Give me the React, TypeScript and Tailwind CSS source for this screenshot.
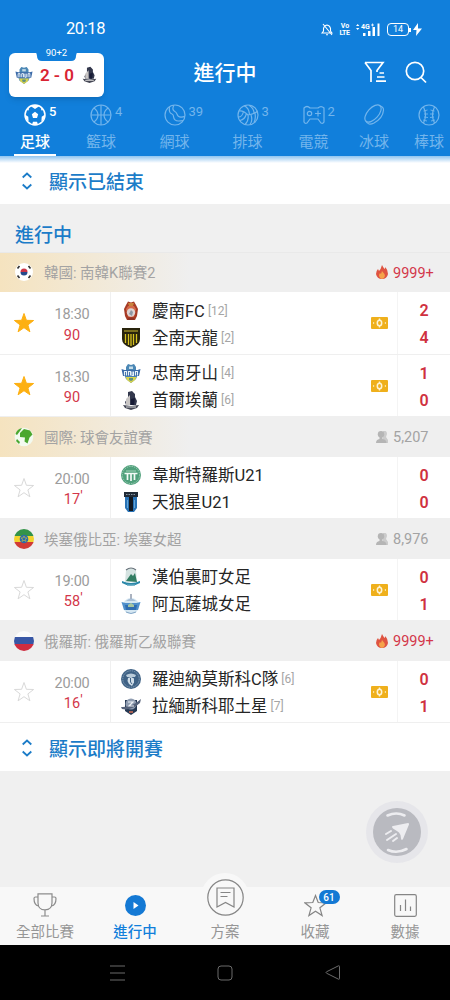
import React from 'react';

type CrestName =
  | 'gyeongnam' | 'jeonnam' | 'asan' | 'eland' | 'vasteras'
  | 'sirius' | 'hambericho' | 'hawassa' | 'rodina' | 'saturn';

interface Team {
  name: string;
  rank?: number;
  crest: CrestName;
  score: number;
}

interface Match {
  time: string;
  minute: string;
  running?: boolean;
  starred?: boolean;
  cash?: boolean;
  teams: Team[];
}

interface League {
  title: string;
  flag: 'kr' | 'world' | 'et' | 'ru';
  viewers: string;
  hot?: boolean;
  pinned?: boolean;
  matches: Match[];
}

const leagues: League[] = [
  {
    title: '韓國: 南韓K聯賽2', flag: 'kr', viewers: '9999+', hot: true, pinned: true,
    matches: [
      {
        time: '18:30', minute: '90', starred: true, cash: true,
        teams: [
          { name: '慶南FC', rank: 12, crest: 'gyeongnam', score: 2 },
          { name: '全南天龍', rank: 2, crest: 'jeonnam', score: 4 },
        ],
      },
      {
        time: '18:30', minute: '90', starred: true, cash: true,
        teams: [
          { name: '忠南牙山', rank: 4, crest: 'asan', score: 1 },
          { name: '首爾埃蘭', rank: 6, crest: 'eland', score: 0 },
        ],
      },
    ],
  },
  {
    title: '國際: 球會友誼賽', flag: 'world', viewers: '5,207', pinned: true,
    matches: [
      {
        time: '20:00', minute: '17', running: true,
        teams: [
          { name: '韋斯特羅斯U21', crest: 'vasteras', score: 0 },
          { name: '天狼星U21', crest: 'sirius', score: 0 },
        ],
      },
    ],
  },
  {
    title: '埃塞俄比亞: 埃塞女超', flag: 'et', viewers: '8,976',
    matches: [
      {
        time: '19:00', minute: '58', running: true, cash: true,
        teams: [
          { name: '漢伯裏町女足', crest: 'hambericho', score: 0 },
          { name: '阿瓦薩城女足', crest: 'hawassa', score: 1 },
        ],
      },
    ],
  },
  {
    title: '俄羅斯: 俄羅斯乙級聯賽', flag: 'ru', viewers: '9999+', hot: true,
    matches: [
      {
        time: '20:00', minute: '16', running: true, cash: true,
        teams: [
          { name: '羅迪納莫斯科C隊', rank: 6, crest: 'rodina', score: 0 },
          { name: '拉緬斯科耶土星', rank: 7, crest: 'saturn', score: 1 },
        ],
      },
    ],
  },
];

const crests: Record<CrestName, React.ReactNode> = {
  gyeongnam: (
    <>
      <path d="M5 4l2-3.500 3 1 3-1L15 4l2 4-1 7-2 4H6l-2-4-1-7z" fill="#a63a25" />
      <path d="M5 8l2-3h6l2 3-2 8H7z" fill="#d5694a" />
      <circle cx="10" cy="11.5" r="4.2" fill="#ddd3d2" />
      <path d="M8 13l2-4 2 2-1 4z" fill="#8d98a5" />
      <path d="M7 2h6l-1 3H8z" fill="#c8833d" />
      <path d="M7 17h6v2H7z" fill="#8f3326" />
    </>
  ),
  jeonnam: (
    <>
      <path d="M1 0h18v11q0 6-9 9q-9-3-9-9z" fill="#29240d" />
      <path d="M4.5 6v9M7.5 6v11M10 6v12M12.5 6v11M15.5 6v9" stroke="#d7c21e" strokeWidth="1.3" />
      <path d="M3 3h14" stroke="#b4a32b" strokeWidth="1.2" />
    </>
  ),
  asan: (
    <>
      <path d="M5 4l2-3 3 1 3-1 2 3v4H5z" fill="#4b87b5" />
      <path d="M8 3.500h4V6H8z" fill="#c5dce8" />
      <path d="M2.500 10h15L15 16l-5 4-5-4z" fill="#4a80b4" />
      <path d="M4.500 14h11L14 17l-4 3-4-3z" fill="#d8d44b" />
      <path d="M8 15h4v2l-2 1-2-1z" fill="#5f8f80" />
      <path d="M.5 6l3 1h13l3-1-1.500 7H2z" fill="#3b6aa8" />
      <path d="M3.500 12.500v-4h2v4M7.500 12.500v-4h2v4M11 8.500v4h1.500v-4M14.500 12.500v-4h2v4" fill="none" stroke="#e6f1f8" strokeWidth="1.100" />
    </>
  ),
  eland: (
    <>
      <path d="M7 2l4-1 3 3v3l2 4-1 4H5l-1-3 3-4z" fill="#33384d" />
      <path d="M5 9l4-4v10H5z" fill="#c9c6c5" />
      <path d="M10 9l4-1-1 7h-3z" fill="#171b36" />
      <path d="M2 15l8 1 8-1-2 3-6 2-6-2z" fill="#454856" />
      <path d="M5 17h10" stroke="#d8d8d8" />
    </>
  ),
  vasteras: (
    <>
      <circle cx="10" cy="10" r="10" fill="#4fa07b" />
      <circle cx="10" cy="10" r="8.6" fill="none" stroke="#bcdccb" strokeWidth=".7" strokeDasharray="1.4 1" />
      <path d="M3.5 8.5h13M6.5 9v6M10 9v7M13.5 9v6" stroke="#f2faf6" strokeWidth="1.7" />
      <path d="M5 6h10" stroke="#a5d3ba" />
    </>
  ),
  sirius: (
    <>
      <path d="M3 0h14v5H3z" fill="#202a36" />
      <path d="M4 5h12v11l-3 4H7l-3-4z" fill="#2872b5" />
      <path d="M8 5h4v14H8z" fill="#121820" />
      <path d="M5 2.500h10" stroke="#8897a4" strokeDasharray="1.5 1" />
      <path d="M6.5 8v8M13.5 8v8" stroke="#74b2e0" strokeWidth=".8" />
    </>
  ),
  hambericho: (
    <>
      <path d="M5 3q5-4 10 0l1 12H4z" fill="#d5e3e1" />
      <path d="M5 3q5-4 10 0" fill="none" stroke="#68727b" strokeWidth="1.2" />
      <path d="M5 14l5-7 2 2 2-3 2 9z" fill="#327d62" />
      <path d="M1 14q9 4 18 0v2q-9 5-18 0z" fill="#2b88a9" />
      <path d="M6 18h8" stroke="#5ca5bf" strokeWidth="1.4" />
    </>
  ),
  hawassa: (
    <>
      <circle cx="10" cy="12" r="8" fill="#d5e7f2" />
      <path d="M10 0v6" stroke="#8f9aab" strokeWidth="1.5" />
      <path d="M5 7q5-5 10 0z" fill="#a8bed6" />
      <path d="M.5 8l4 1h11l4-1L17 16H3z" fill="#4f90cc" />
      <path d="M4 11h12l-1 5H5z" fill="#2f6db0" />
      <path d="M7 11l3-2 3 2v2H7z" fill="#a6c5a0" />
      <path d="M5 18q5 3 10 0" fill="none" stroke="#85a7c7" />
    </>
  ),
  rodina: (
    <>
      <circle cx="10" cy="10" r="10" fill="#3f6285" />
      <circle cx="10" cy="10" r="8.200" fill="none" stroke="#8fa8bf" strokeWidth=".8" strokeDasharray="1.500 .8" />
      <path d="M5 6q5-3 10 0l-1 2H6z" fill="#b9cbd9" />
      <path d="M7 9l3-1 3 1.500v4L11 17l-3-2-1.500-3z" fill="#cfdde8" />
      <path d="M9.500 9v4l1.500 2" fill="none" stroke="#3f6285" strokeWidth="1" />
    </>
  ),
  saturn: (
    <>
      <path d="M4 4h12v11l-6 4-6-4z" fill="#243751" />
      <circle cx="10" cy="8" r="5.500" fill="#8f9cb0" />
      <path d="M0 11q10 1 20-8l-1 4Q10 15 1 13z" fill="#56627a" />
      <path d="M7 6h5l-4 4h5" fill="none" stroke="#eef1f5" strokeWidth="1.2" />
      <path d="M8 15h4v2H8z" fill="#a86155" />
    </>
  ),
};

const Crest = ({ name, className = 'size-5' }: { name: CrestName; className?: string }) => (
  <svg viewBox="0 0 20 20" className={className}>{crests[name]}</svg>
);

const flags = {
  kr: (
    <>
      <circle cx="10" cy="10" r="9" fill="#fff" />
      <path d="M6.5 10a3.5 3.5 0 0 1 7 0z" fill="#cc3547" />
      <path d="M6.5 10a3.5 3.5 0 0 0 7 0z" fill="#254a8c" />
      <path d="M3.5 6.5l2-2.5M14.5 4l2 2.5M3.5 13.5l2 2.5M14.5 16l2-2.5" stroke="#333" strokeWidth="1.7" />
    </>
  ),
  world: (
    <>
      <circle cx="10" cy="10" r="9.3" fill="#f3faf0" />
      <path d="M1.500 7Q3 2 8 1L6 4 3 8zM6 6l4-4 6 1.500 2.500 4-3 3-2 6-3-2 .5-4-5-.5zM3 12l3 3-1 2-3-3z" fill="#4ba72f" />
    </>
  ),
  et: (
    <>
      <rect width="20" height="7" fill="#339348" />
      <rect y="7" width="20" height="6" fill="#f2d32e" />
      <rect y="13" width="20" height="7" fill="#d13b35" />
      <circle cx="10" cy="10" r="4.300" fill="#2d6ca8" />
      <path d="M10 7l1 2h2l-1.600 1.300.6 2.200-2-1.300-2 1.300.6-2.200L7 9h2z" fill="none" stroke="#bdb94b" strokeWidth=".7" />
    </>
  ),
  ru: (
    <>
      <rect width="20" height="7" fill="#fafafa" />
      <rect y="6" width="20" height="7.500" fill="#3857a5" />
      <rect y="13" width="20" height="7" fill="#cf2d40" />
    </>
  ),
};

const sportIcons = {
  soccer: (
    <>
      <circle cx="11" cy="11" r="10" strokeWidth="1.500" />
      <path d="M11 7.800l3.200 2.400-1.200 3.800H9l-1.200-3.800z" fill="currentColor" stroke="none" />
      <path d="M6.500 2l4.500 3 4.500-3Q11 0 6.500 2zM1 10.500l3.300 2.300.3 4.700Q1 15 1 10.500zM21 10.500l-3.300 2.300-.3 4.700Q21 15 21 10.500zM8 20.500l1-2.700h4l1 2.700q-3 1-6 0zM2.500 6l2 .5L5.500 3zM19.500 6l-2 .5L16.500 3z" fill="currentColor" stroke="none" />
    </>
  ),
  basketball: (
    <>
      <circle cx="11" cy="11" r="10" />
      <path d="M11 1v20M1 11h20M4 4q4 3 4 7t-4 7M18 4q-4 3-4 7t4 7" />
    </>
  ),
  tennis: (
    <>
      <circle cx="11" cy="11" r="10" />
      <path d="M5.500 2.800q-1 6 2.500 7.200 1.500.6 1.500 2.500.5 4.500 5 4.500 3 0 4.500-.5" />
      <path d="M10 1.200q-2.500 4 .5 6 2 1 2.500 3 .8 3 4 3 2.500-.2 3.800-1" />
    </>
  ),
  volleyball: (
    <>
      <circle cx="11" cy="11" r="10" />
      <path d="M11 11q-5-5-9-4M11 11q1 6-3 9.500M11 11q7-1 9.500-4M7 1.800q5 2 5.500 8.500M12 1.200q5 3 5 8M3 16.500q5-1 6.300-6.500M1.300 13q4 0 5-5M13 20.500q3-4 1-9.500M17 18.500q2-4 1-9" />
    </>
  ),
  esports: (
    <>
      <path d="M1 4q3-3 6 0h8q3-3 6 0v14q-1 2-3 1l-3-4H7l-3 4q-2 1-3-1z" />
      <circle cx="6.500" cy="9.500" r="2.200" />
      <path d="M15 6.500v6M12 9.500h6" />
    </>
  ),
  hockey: (
    <>
      <ellipse cx="10" cy="9.500" rx="10.500" ry="5.500" transform="rotate(-48 10 9.500)" />
      <path d="M3 17q2 5 8 2 9-5 9.500-13 .2-3-4-4.500" />
    </>
  ),
  baseball: (
    <>
      <circle cx="11" cy="11" r="10" />
      <path d="M5.500 3q4 8 0 16M16.500 3q-4 8 0 16" />
      <path d="M5.500 7l4-1M6 10h4M6 13l4 .5M5 16l4 1M16.500 7l-4-1M16 10h-4M16 13l-4 .5M17 16l-4 1" strokeWidth=".9" />
    </>
  ),
};

const sports = [
  { label: '足球', count: 5, icon: 'soccer', width: 'w-[70px]' },
  { label: '籃球', count: 4, icon: 'basketball', width: 'w-[62px]' },
  { label: '網球', count: 39, icon: 'tennis', width: 'w-[85px]' },
  { label: '排球', count: 3, icon: 'volleyball', width: 'w-[61px]' },
  { label: '電競', count: 2, icon: 'esports', width: 'w-[71px]' },
  { label: '冰球', icon: 'hockey', width: 'w-[50px]' },
  { label: '棒球', icon: 'baseball', width: 'w-[60px]' },
] as const;

const StatusBar = () => (
  <div className="flex h-[50px] items-center pt-[9px] pr-[28px] pl-[66px]">
    <span className="text-[16.5px] tracking-tight">20:18</span>
    <div className="ml-auto flex items-center">
      <svg className="mr-[7px] h-[13px] w-[12px]" viewBox="0 0 12 13" fill="none" stroke="currentColor" strokeWidth="1.1">
        <path d="M1 10h10L9.500 8V5.500Q9 2.500 6 2 3 2.500 2.500 5.500V8zM5 11.800h2M2 1l9 11" />
      </svg>
      <div className="mr-[6px] w-[10px] text-center text-[7px] leading-[6.5px] font-bold">
        <div>Vo</div>
        <div className="-ml-px tracking-tighter">LTE</div>
      </div>
      <svg className="mr-[7px] h-[15px] w-[24px]" viewBox="0 0 24 15" fill="currentColor">
        <path d="M0 4l1.700-2 1.700 2zM0 6l1.700 2 1.700-2zM7 11h2.500v3H7zM12 9h2.500v5H12zM16.500 5H19v9h-2.500zM21.500 1.500h2V14h-2z" />
        <text x="5" y="7" fontSize="7" fontWeight="700">4G</text>
        <path d="M15 3h3M16.500 1.500v3" stroke="currentColor" strokeWidth=".8" />
      </svg>
      <div className="flex h-[13px] w-[22px] items-center justify-center rounded-[4px] border border-white text-[9px] leading-none">14</div>
      <div className="h-1 w-[2px] bg-white" />
      <svg className="ml-[2px] h-[13px] w-[9px]" viewBox="0 0 9 13" fill="currentColor">
        <path d="M5 0L0 7h3.500L3 13l6-7.500H5z" />
      </svg>
    </div>
  </div>
);

const MiniScore = () => (
  <div className="absolute top-[3px] left-[9px] flex h-[43.5px] w-[95px] items-center justify-between rounded-[6px] bg-white px-[6px] shadow-md">
    <svg className="absolute -top-px left-[26px] h-[9px] w-[43px]" viewBox="0 0 43 9">
      <path d="M0 0h43q-2 1-2 4 0 5-5 5H7Q2 9 2 4 2 1 0 0z" fill="#117fdb" />
    </svg>
    <span className="absolute -top-[6px] left-0 w-full text-center text-[9.5px] leading-[12px]">90+2</span>
    <Crest name="asan" className="size-[18px]" />
    <span className="text-[17px] leading-5 font-semibold text-[#d92433]">2 - 0</span>
    <Crest name="eland" className="size-[17px]" />
  </div>
);

const Header = () => (
  <header className="bg-[#117fdb] text-white">
    <StatusBar />
    <div className="relative flex h-[46px] items-center justify-end pr-[23px] pb-[2px]">
      <MiniScore />
      <h1 className="absolute inset-x-0 top-0 text-center text-[21px] leading-[47px] font-medium">進行中</h1>
      <svg className="mr-[18px] h-[22px] w-[23px]" viewBox="0 0 23 22" fill="none" stroke="currentColor" strokeWidth="1.700">
        <path d="M1 1.500h18l-6 8v1.500M1 1.500l6 8V21" />
        <path d="M15.500 12H20M13 16h7.500M12 20.200h10" />
      </svg>
      <svg className="h-[23px] w-[22px]" viewBox="0 0 22 23" fill="none" stroke="currentColor" strokeWidth="1.700">
        <circle cx="10" cy="10" r="8.700" />
        <path d="M16 16.500l5 5" />
      </svg>
    </div>
    <nav className="flex h-[60px] overflow-hidden">
      {sports.map((sport, i) => (
        <div
          key={sport.label}
          className={`relative flex shrink-0 flex-col items-center pt-[8px] ${sport.width} ${i === 0 ? 'font-medium' : 'text-[#73b5ec]'}`}
        >
          <div className="relative">
            <svg className="size-[22px]" viewBox="0 0 22 22" fill="none" stroke="currentColor" strokeWidth="1.200">
              {sportIcons[sport.icon]}
            </svg>
            {'count' in sport && (
              <span className="absolute top-0 left-full ml-[3px] text-[13px] leading-[15px]">{sport.count}</span>
            )}
          </div>
          <span className="mt-[5px] text-[15px] leading-[22px]">{sport.label}</span>
          {i === 0 && <span className="absolute bottom-0 h-[2px] w-[42px] bg-white" />}
        </div>
      ))}
    </nav>
  </header>
);

const ToggleRow = ({ label }: { label: string }) => (
  <div className="flex h-12 items-center bg-white pt-[2px] pl-[22px] text-[#1c7cc8]">
    <svg className="mr-[17px] h-[18px] w-[10px]" viewBox="0 0 10 18" fill="none" stroke="currentColor" strokeWidth="1.800">
      <path d="M.7 5.500L5 1.500l4.300 4M.7 12.500l4.300 4 4.300-4" />
    </svg>
    <span className="pt-[3px] text-[19px] leading-6 font-medium">{label}</span>
  </div>
);

const Flame = () => (
  <svg className="h-[14px] w-[12px]" viewBox="0 0 12 14">
    <path d="M6 0q1 2 2.500 4 1-1 .8-2Q12 5 12 9q-1 5-6 5T0 9q0-3 2-5l1 2Q5 4 6 0z" fill="#df5441" />
    <path d="M6 6q3 3 3 5-1 3-3 3t-3-3q0-2 1-3l1 1z" fill="#f5a34a" />
  </svg>
);

const Viewers = () => (
  <svg className="h-[12px] w-[12px]" viewBox="0 0 12 12" fill="#b5b5b5">
    <path d="M7 0q4-1 4 3l-1 3 2 3v3H7z" fill="#cbcbcb" />
    <circle cx="5" cy="3.200" r="3.200" />
    <path d="M3.500 6h3v2q4 .5 4 4H0q0-3.500 3.500-4z" />
  </svg>
);

const Star = ({ filled }: { filled?: boolean }) => (
  <svg className="size-[22px]" viewBox="0 0 22 22">
    <path
      d="M11 1.500l2.400 6.800 7.200.2-5.700 4.400 2 6.900-5.900-4.100-5.900 4.100 2-6.900L1.400 8.500l7.200-.2z"
      fill={filled ? '#fdb012' : 'none'}
      stroke={filled ? '#fdb012' : '#d9d9d9'}
    />
  </svg>
);

const Cash = () => (
  <svg className="h-[12px] w-[17px]" viewBox="0 0 17 12">
    <rect width="17" height="12" rx="1" fill="#efb01c" />
    <ellipse cx="8.500" cy="6" rx="2.200" ry="2.800" fill="none" stroke="#fff4d5" strokeWidth="1.500" />
    <path d="M8.500 1.500v2M8.500 8.500v2" stroke="#fff4d5" strokeWidth="1.400" />
    <path d="M2 6l.8-.8v1.600zM15 6l-.8-.8v1.600z" fill="#fff4d5" stroke="#fff4d5" strokeWidth=".5" />
  </svg>
);

const MatchRow = ({ match }: { match: Match }) => (
  <div className="flex h-[62.5px] border-b border-[#efefef] bg-white">
    <div className="flex w-[48px] items-center justify-center pt-px">
      <Star filled={match.starred} />
    </div>
    <div className="flex w-[48px] flex-col items-center pt-[13px] text-[14.5px] leading-[20.5px]">
      <span className="tracking-[-0.2px] text-[#9c9c9c]">{match.time}</span>
      <span className="relative text-[#d3374a]">
        {match.minute}
        {match.running && <span className="absolute -top-[3px] left-full">'</span>}
      </span>
    </div>
    <div className="ml-[14px] flex flex-1 flex-col border-l border-[#f0f0f0] pt-[5px] pl-[10px]">
      {match.teams.map((team) => (
        <div key={team.name} className="flex h-[27px] items-center">
          <Crest name={team.crest} />
          <span className="ml-[11px] pt-px text-[16.5px] leading-[27px] text-[#252525]">{team.name}</span>
          {team.rank && <span className="ml-[3px] text-[12px] text-[#a5a5a5]">[{team.rank}]</span>}
        </div>
      ))}
    </div>
    <div className="flex w-[26px] items-center pt-px">{match.cash && <Cash />}</div>
    <div className="flex w-[53px] flex-col items-center border-l border-[#f4f4f4] pt-[5px] text-[16px] leading-[27px] font-semibold text-[#cf3040]">
      {match.teams.map((team) => (
        <span key={team.name}>{team.score}</span>
      ))}
    </div>
  </div>
);

const LeagueBlock = ({ league }: { league: League }) => (
  <section>
    <div
      className={`flex h-[39.5px] items-center pl-[14px] ${
        league.pinned ? 'bg-[linear-gradient(90deg,#f5e3bf_0,#efefef_190px)]' : 'bg-[#efefef]'
      }`}
    >
      <svg className="size-5 rounded-full" viewBox="0 0 20 20">{flags[league.flag]}</svg>
      <span className="ml-[10px] pt-[4px] text-[14.5px] text-[#a3a3a3]">{league.title}</span>
      <div className="ml-auto flex w-[74px] items-center gap-[5px]">
        {league.hot ? <Flame /> : <Viewers />}
        <span className={`pt-[3px] text-[14.5px] ${league.hot ? 'text-[#d3374a]' : 'text-[#a3a3a3]'}`}>{league.viewers}</span>
      </div>
    </div>
    {league.matches.map((match) => (
      <MatchRow key={match.teams[0].name} match={match} />
    ))}
  </section>
);

const FloatingButton = () => (
  <div className="absolute top-[801px] left-[366px] flex size-[62px] items-center justify-center rounded-full bg-[#e6e6ea]">
    <svg className="size-[48px]" viewBox="0 0 48 48">
      <circle cx="24" cy="24" r="24" fill="#b9bac0" />
      <path d="M14.500 7.500q9-4 17 0M15 42q9 4 18.500-1" fill="none" stroke="#ededf0" strokeWidth="2.600" strokeLinecap="round" />
      <path d="M20 18l15-3q1.500 0 1 1.500L30 31q-1.500 2-2-.5 0-4-2-6-2-1.500-6-4-2-2 0-2.500z" fill="#ededf0" />
      <path d="M13 26l5-3M14 32l9-6M20 33l4-3" stroke="#ededf0" strokeWidth="2" strokeLinecap="round" />
    </svg>
  </div>
);

const BottomNav = () => (
  <nav className="grid h-[58px] grid-cols-5 bg-[#f8f8f8] text-[14.5px] text-[#969696]">
    <div className="flex flex-col items-center">
      <svg className="mt-[6px] h-[24px] w-[24px]" viewBox="0 0 24 24" fill="none" stroke="#8c8c8c" strokeWidth="1.200">
        <path d="M5 .8h14v9q0 7-7 7t-7-7zM12 17v6M8 23h8" />
        <path d="M5 4H2.500Q1 4 1 5.500 1 12 5.500 13M19 4h2.500Q23 4 23 5.500q0 6.500-4.500 7.500" />
      </svg>
      <span className="mt-[5px] leading-[22px]">全部比賽</span>
    </div>
    <div className="flex flex-col items-center font-medium text-[#117fdb]">
      <svg className="mt-[8px] size-[21px]" viewBox="0 0 21 21">
        <circle cx="10.500" cy="10.500" r="10.500" fill="#1479d4" />
        <path d="M8.500 7l5 3.500-5 3.500z" fill="#fff" />
      </svg>
      <span className="mt-[6px] leading-[22px]">進行中</span>
    </div>
    <div className="relative flex flex-col items-center">
      <div className="-mt-[14px] flex size-[48px] items-center justify-center rounded-full bg-[#f8f8f8]">
        <svg className="size-[37px]" viewBox="0 0 37 37" fill="none" stroke="#858585" strokeWidth="1.200">
          <circle cx="18.500" cy="18.500" r="17.700" />
          <path d="M10 9h17v19l-8.500-4.500L10 28zM13.500 13.500h10M13.500 17.500h7" />
        </svg>
      </div>
      <span className="mt-px leading-[22px]">方案</span>
    </div>
    <div className="flex flex-col items-center">
      <div className="relative mt-[7px]">
        <svg className="size-[23px]" viewBox="0 0 23 23" fill="none" stroke="#858585" strokeWidth="1.200">
          <path d="M11.500 1.500l2.700 7 8 .3-6.300 5 2.200 7.700-6.600-4.300-6.600 4.300 2.200-7.700-6.300-5 8-.3z" />
        </svg>
        <span className="absolute -top-[4px] left-[15px] flex h-[14px] w-[21px] items-center justify-center rounded-full bg-[#1479d4] text-[10px] font-medium text-white">
          61
        </span>
      </div>
      <span className="mt-[5px] leading-[22px]">收藏</span>
    </div>
    <div className="flex flex-col items-center">
      <svg className="mt-[7px] size-[23px]" viewBox="0 0 23 23" fill="none" stroke="#858585" strokeWidth="1.200">
        <rect x=".7" y=".7" width="21.600" height="21.600" rx="1.500" />
        <path d="M6.500 11v6M11.500 5.500V17M16.500 12.500V17" />
      </svg>
      <span className="mt-[5px] leading-[22px]">數據</span>
    </div>
  </nav>
);

const SystemNav = () => (
  <div className="flex h-[55px] items-center justify-between bg-black px-[109px] text-[#6b6b6b]">
    <svg className="h-[16px] w-[17px]" viewBox="0 0 17 16" stroke="currentColor">
      <path d="M1 1h15M1 8h15M1 15h15" />
    </svg>
    <svg className="size-[16px]" viewBox="0 0 16 16" fill="none" stroke="currentColor">
      <rect x="1" y="1" width="14" height="14" rx="3" />
    </svg>
    <svg className="size-[17px]" viewBox="0 0 17 17" fill="none" stroke="currentColor">
      <path d="M15.500 2.500v12q0 1-1 .7l-12-6q-1-.7 0-1.400l12-6q1-.3 1 .7z" />
    </svg>
  </div>
);

const App: React.FC = () => (
  <div className="relative flex h-[1000px] w-[450px] flex-col overflow-hidden bg-[#f0f0f0] font-[Roboto,'Noto_Sans_CJK_TC',sans-serif]">
    <Header />
    <div className="relative">
      <ToggleRow label="顯示已結束" />
      {/* sombra bajo la cabecera */}
      <div className="absolute inset-x-0 top-0 h-[7px] bg-linear-to-b from-[#8fc4f0] to-white/0" />
    </div>
    <h2 className="h-[48.5px] border-b border-[#e9e9e9] pt-[18px] pl-[15px] text-[19px] leading-[27px] font-medium text-[#1c7cc8]">進行中</h2>
    {leagues.map((league) => (
      <LeagueBlock key={league.title} league={league} />
    ))}
    <ToggleRow label="顯示即將開賽" />
    <FloatingButton />
    <div className="mt-auto">
      <BottomNav />
      <SystemNav />
    </div>
  </div>
);

export default App;
